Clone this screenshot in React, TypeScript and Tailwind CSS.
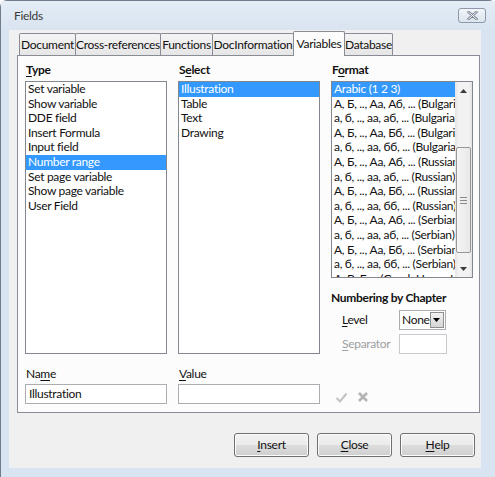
import React from "react";

const typeItems = [
  "Set variable",
  "Show variable",
  "DDE field",
  "Insert Formula",
  "Input field",
  "Number range",
  "Set page variable",
  "Show page variable",
  "User Field",
];

const selectItems = ["Illustration", "Table", "Text", "Drawing"];

const formatItems = [
  "Arabic (1 2 3)",
  "А, Б, .., Аа, Аб, ... (Bulgarian)",
  "а, б, .., аа, аб, ... (Bulgarian)",
  "А, Б, .., Аа, Бб, ... (Bulgarian)",
  "а, б, .., аа, бб, ... (Bulgarian)",
  "А, Б, .., Аа, Аб, ... (Russian)",
  "а, б, .., аа, аб, ... (Russian)",
  "А, Б, .., Аа, Бб, ... (Russian)",
  "а, б, .., аа, бб, ... (Russian)",
  "А, Б, .., Аа, Аб, ... (Serbian)",
  "а, б, .., аа, аб, ... (Serbian)",
  "А, Б, .., Аа, Бб, ... (Serbian)",
  "а, б, .., аа, бб, ... (Serbian)",
  "Α, Β, Γ, ... (Greek Upper Letter)",
];

const tabs = [
  { label: "Document", w: "w-[57px]" },
  { label: "Cross-references", w: "w-[86px]" },
  { label: "Functions", w: "w-[53px]" },
  { label: "DocInformation", w: "w-[82px]" },
  { label: "Variables", w: "w-[52px]", active: true },
  { label: "Database", w: "w-[49px]" },
];

function U({ children }: { children: React.ReactNode }) {
  return <span className="underline underline-offset-[2px] decoration-1">{children}</span>;
}

function ListRow({ text, selected }: { text: string; selected?: boolean }) {
  return (
    <div
      className={`h-[14.6px] leading-[14.6px] pl-[2px] whitespace-nowrap overflow-hidden ${
        selected ? "bg-[#3399ff] text-white" : ""
      }`}
    >
      {text}
    </div>
  );
}

function Button({ children }: { children: React.ReactNode }) {
  return (
    <div className="w-[75px] h-[24px] rounded-[3px] border border-[#707070] bg-[linear-gradient(#f2f2f2_0%,#ebebeb_50%,#dddddd_51%,#cfcfcf_100%)] flex items-center justify-center shadow-[inset_0_0_0_1px_#fcfcfc]">
      {children}
    </div>
  );
}

export default function App() {
  return (
    <div className="w-[495px] h-[477px] bg-white font-['Lato','Segoe_UI',sans-serif] text-[12px] tracking-[-0.3px] text-[#111] overflow-hidden">
      <div className="w-[496px] h-[477px] bg-[#d8e4f1] border-l border-t border-[#6f7c8c] rounded-t-[7px] flex flex-col">
        {/* title bar */}
        <div className="h-[29px] flex items-center justify-between bg-[linear-gradient(#e4ecf5,#d9e4f1)]">
          <span className="pl-[13px] text-[#3a3a3a]">Fields</span>
          <div className="mr-[10px] w-[28px] h-[15px] rounded-[3px] border border-[#8d99aa] bg-[linear-gradient(#f3f6fa,#dbe3ec)] flex items-center justify-center">
            <svg width="11" height="9" viewBox="0 0 11 9">
              <path d="M1.5 1 L9.5 8 M9.5 1 L1.5 8" stroke="#7a8594" strokeWidth="2.6" strokeLinecap="round" />
              <path d="M1.5 1 L9.5 8 M9.5 1 L1.5 8" stroke="#f4f6f9" strokeWidth="1" strokeLinecap="round" />
            </svg>
          </div>
        </div>

        {/* client area */}
        <div className="pl-[8px]">
          <div className="w-[472px] h-[438px] bg-[#f0f0f0] flex flex-col">
            {/* tabs */}
            <div className="h-[25px] flex items-end pl-[10px]">
              {tabs.map((t, i) =>
                t.active ? (
                  <div
                    key={t.label}
                    className={`${t.w} h-[25px] -mb-px -ml-px relative z-10 border-l border-r border-t border-[#898c95] bg-[#fcfcfc] flex items-start justify-center pt-[3px] rounded-t-[2px] whitespace-nowrap`}
                  >
                    {t.label}
                  </div>
                ) : (
                  <div
                    key={t.label}
                    className={`${t.w} h-[22px] ${i > 0 ? "-ml-px" : ""} border-l border-r border-t border-[#898c95] bg-[linear-gradient(#f4f4f4,#e6e6e6)] flex items-center justify-center rounded-t-[2px] whitespace-nowrap`}
                  >
                    {t.label}
                  </div>
                )
              )}
            </div>

            {/* tab page */}
            <div className="ml-[8px] w-[463px] h-[358px] border border-[#898c95] bg-[#fcfcfc] flex pl-[7px] pt-[6px] gap-[11px]">
              {/* left block */}
              <div className="w-[295px] flex flex-col">
                <div className="flex gap-[11px]">
                  <div className="w-[142px] flex flex-col">
                    <div className="h-[15px] leading-[15px] font-bold pl-[1px]">
                      <U>T</U>ype
                    </div>
                    <div className="mt-[4px] h-[273px] border border-[#828790] bg-white">
                      {typeItems.map((t) => (
                        <ListRow key={t} text={t} selected={t === "Number range"} />
                      ))}
                    </div>
                  </div>
                  <div className="w-[142px] flex flex-col">
                    <div className="h-[15px] leading-[15px] font-bold pl-[1px]">
                      S<U>e</U>lect
                    </div>
                    <div className="mt-[4px] h-[273px] border border-[#828790] bg-white">
                      {selectItems.map((t) => (
                        <ListRow key={t} text={t} selected={t === "Illustration"} />
                      ))}
                    </div>
                  </div>
                </div>
                <div className="flex gap-[11px] mt-[12px]">
                  <div className="w-[142px] flex flex-col">
                    <div className="h-[15px] leading-[15px] pl-[1px]">
                      Na<U>m</U>e
                    </div>
                    <div className="mt-[3px] h-[20px] border border-[#abadb3] bg-white flex items-center pl-[3px]">
                      Illustration
                    </div>
                  </div>
                  <div className="w-[142px] flex flex-col">
                    <div className="h-[15px] leading-[15px] pl-[1px]">
                      <U>V</U>alue
                    </div>
                    <div className="mt-[3px] h-[20px] border border-[#abadb3] bg-white" />
                  </div>
                </div>
              </div>

              {/* format column */}
              <div className="w-[142px] flex flex-col">
                <div className="h-[15px] leading-[15px] font-bold pl-[1px]">
                  F<U>o</U>rmat
                </div>
                <div className="mt-[4px] h-[197px] border border-[#828790] bg-white flex">
                  <div className="flex-1 overflow-hidden">
                    {formatItems.map((t, i) => (
                      <ListRow key={i} text={t} selected={i === 0} />
                    ))}
                  </div>
                  <div className="w-[17px] flex flex-col bg-[linear-gradient(90deg,#e3e3e3,#f2f2f2_20%,#f2f2f2_80%,#e3e3e3)]">
                    <div className="h-[17px] flex items-center justify-center">
                      <svg width="7" height="4" viewBox="0 0 7 4">
                        <path d="M0 4 L3.5 0 L7 4 Z" fill="#3b3b3b" />
                      </svg>
                    </div>
                    <div className="h-[48px]" />
                    <div className="mx-[1px] h-[106px] rounded-[2px] border border-[#979797] bg-[linear-gradient(90deg,#f4f4f4,#e8e8e8)] flex flex-col items-center justify-center gap-[2px]">
                      <div className="w-[7px] h-px bg-[#8a8a8a]" />
                      <div className="w-[7px] h-px bg-[#8a8a8a]" />
                      <div className="w-[7px] h-px bg-[#8a8a8a]" />
                    </div>
                    <div className="flex-1" />
                    <div className="h-[17px] flex items-center justify-center">
                      <svg width="7" height="4" viewBox="0 0 7 4">
                        <path d="M0 0 L3.5 4 L7 0 Z" fill="#3b3b3b" />
                      </svg>
                    </div>
                  </div>
                </div>

                <div className="mt-[12px] h-[15px] leading-[15px] font-bold whitespace-nowrap">Numbering by Chapter</div>

                <div className="mt-[5px] h-[20px] flex items-center pl-[11px]">
                  <div className="w-[57px]">
                    <U>L</U>evel
                  </div>
                  <div className="w-[47px] h-[20px] border border-[#abadb3] bg-white flex items-center justify-between pl-[2px]">
                    <span>None</span>
                    <div className="w-[15px] h-[16px] mr-[1px] border border-[#8e8f8f] bg-[linear-gradient(#f2f2f2,#d5d5d5)] flex items-center justify-center">
                      <svg width="7" height="4" viewBox="0 0 7 4">
                        <path d="M0 0 L3.5 4 L7 0 Z" fill="#000" />
                      </svg>
                    </div>
                  </div>
                </div>

                <div className="mt-[4px] h-[20px] flex items-center pl-[11px]">
                  <div className="w-[57px] text-[#a0a0a0]">
                    <U>S</U>eparator
                  </div>
                  <div className="w-[48px] h-[20px] border border-[#c8cacf] bg-white" />
                </div>

                <div className="mt-[37px] flex items-center gap-[9px] pl-[4px]">
                  <svg width="13" height="11" viewBox="0 0 13 11">
                    <path d="M1.5 6 L5 9.5 L11.5 1.5" fill="none" stroke="#c2c2c2" strokeWidth="2" />
                  </svg>
                  <svg width="12" height="12" viewBox="0 0 12 12">
                    <path d="M2 2 L10 10 M10 2 L2 10" stroke="#b4b4b4" strokeWidth="2.6" />
                  </svg>
                </div>
              </div>
            </div>

            {/* buttons */}
            <div className="mt-[20px] ml-[225px] flex gap-[8px]">
              <Button>
                <U>I</U>nsert
              </Button>
              <Button>
                <U>C</U>lose
              </Button>
              <Button>
                <U>H</U>elp
              </Button>
            </div>
          </div>
        </div>
      </div>
    </div>
  );
}
